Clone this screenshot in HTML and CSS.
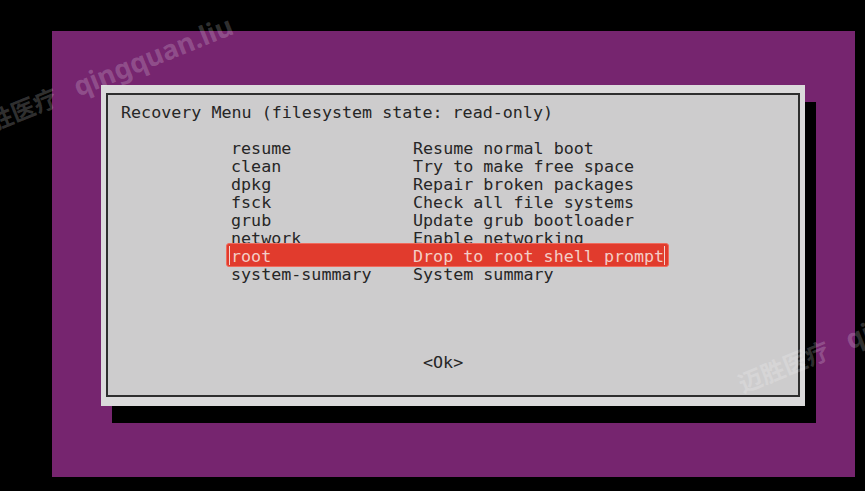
FILE: index.html
```html
<!DOCTYPE html>
<html lang="en">
<head>
  <meta charset="UTF-8" />
  <meta name="viewport" content="width=device-width, initial-scale=1.0" />
  <title>Recovery Menu</title>
  <link rel="stylesheet" href="styles.css">
</head>
<body>

  <div class="screen">
    <div class="desktop">
      <div class="dialog">
        <div class="frame">
          <div class="title">Recovery Menu (filesystem state: read-only)</div>

          <div class="list">
            <div class="item"><span>resume</span><span>Resume normal boot</span></div>
            <div class="item"><span>clean</span><span>Try to make free space</span></div>
            <div class="item"><span>dpkg</span><span>Repair broken packages</span></div>
            <div class="item"><span>fsck</span><span>Check all file systems</span></div>
            <div class="item"><span>grub</span><span>Update grub bootloader</span></div>
            <div class="item"><span>network</span><span>Enable networking</span></div>
            <div class="item selected"><span>root</span><span>Drop to root shell prompt</span></div>
            <div class="item"><span>system-summary</span><span>System summary</span></div>
          </div>

          <div class="buttons">&lt;Ok&gt;</div>
        </div>
      </div>
    </div>

    <div class="mark mark-top"><span class="cn">迈胜医疗</span><span class="en">qingquan.liu</span></div>
    <div class="mark mark-bottom"><span class="cn">迈胜医疗</span><span class="en">qingquan.liu</span></div>
  </div>

</body>
</html>
```

FILE: styles.css
```css
body {
  margin: 0;
  padding: 0;
  background-color: #000;
}
.screen {
  position: relative;
  width: 865px;
  height: 491px;
  overflow: hidden;
  background-color: #000;
}
.desktop {
  box-sizing: border-box;
  width: 803px;
  height: 446px;
  margin: 0 0 0 52px;
  position: relative;
  top: 31px;
  padding: 54px 0 0 49px;
  background-color: #76256f;
}
.dialog {
  box-sizing: border-box;
  width: 704px;
  height: 321px;
  padding: 8px 5px 9px 5px;
  background-color: #dbdadb;
  box-shadow: 11px 17px 0 #000;
}
.frame {
  box-sizing: border-box;
  height: 100%;
  padding: 8px 0 0 13px;
  border: 2px solid #2e2e2e;
  background-color: #cdcccd;
  font-family: "DejaVu Sans Mono", "Liberation Mono", monospace;
  font-size: 16.7px;
  line-height: 18px;
  color: #262626;
  white-space: nowrap;
}
.title {
  height: 18px;
}
.list {
  margin: 18px 0 0 110px;
  width: 434px;
}
.item {
  display: grid;
  grid-template-columns: 182px 252px;
  height: 18px;
}
.item.selected {
  position: relative;
  isolation: isolate;
  color: #f4cdc6;
}
.item.selected::before {
  content: "";
  position: absolute;
  top: -4px;
  bottom: -2px;
  left: -5px;
  right: -4px;
  z-index: -1;
  background-color: #e13b2d;
  border: 1px solid #f06a5c;
  border-radius: 3px;
}
.item.selected::after {
  content: "";
  position: absolute;
  top: -1px;
  bottom: 0;
  left: -2px;
  right: 0;
  border-left: 1px solid #f3d3ce;
  border-right: 1px solid #f3d3ce;
}
.buttons {
  margin: 70px 0 0 302px;
  height: 18px;
}
.mark {
  position: absolute;
  white-space: nowrap;
  transform: rotate(-22deg);
  transform-origin: 0 50%;
  font-family: "Noto Sans", "Noto Sans CJK SC", sans-serif;
  font-weight: bold;
  font-size: 27px;
  line-height: 30px;
  color: rgba(255, 255, 255, 0.2);
}
.mark .cn {
  font-family: "Noto Sans CJK SC", sans-serif;
  font-size: 24px;
}
.mark .en {
  margin-left: 20px;
}
.mark-top {
  left: -33px;
  top: 116px;
}
.mark-bottom {
  left: 739px;
  top: 369px;
}
```
